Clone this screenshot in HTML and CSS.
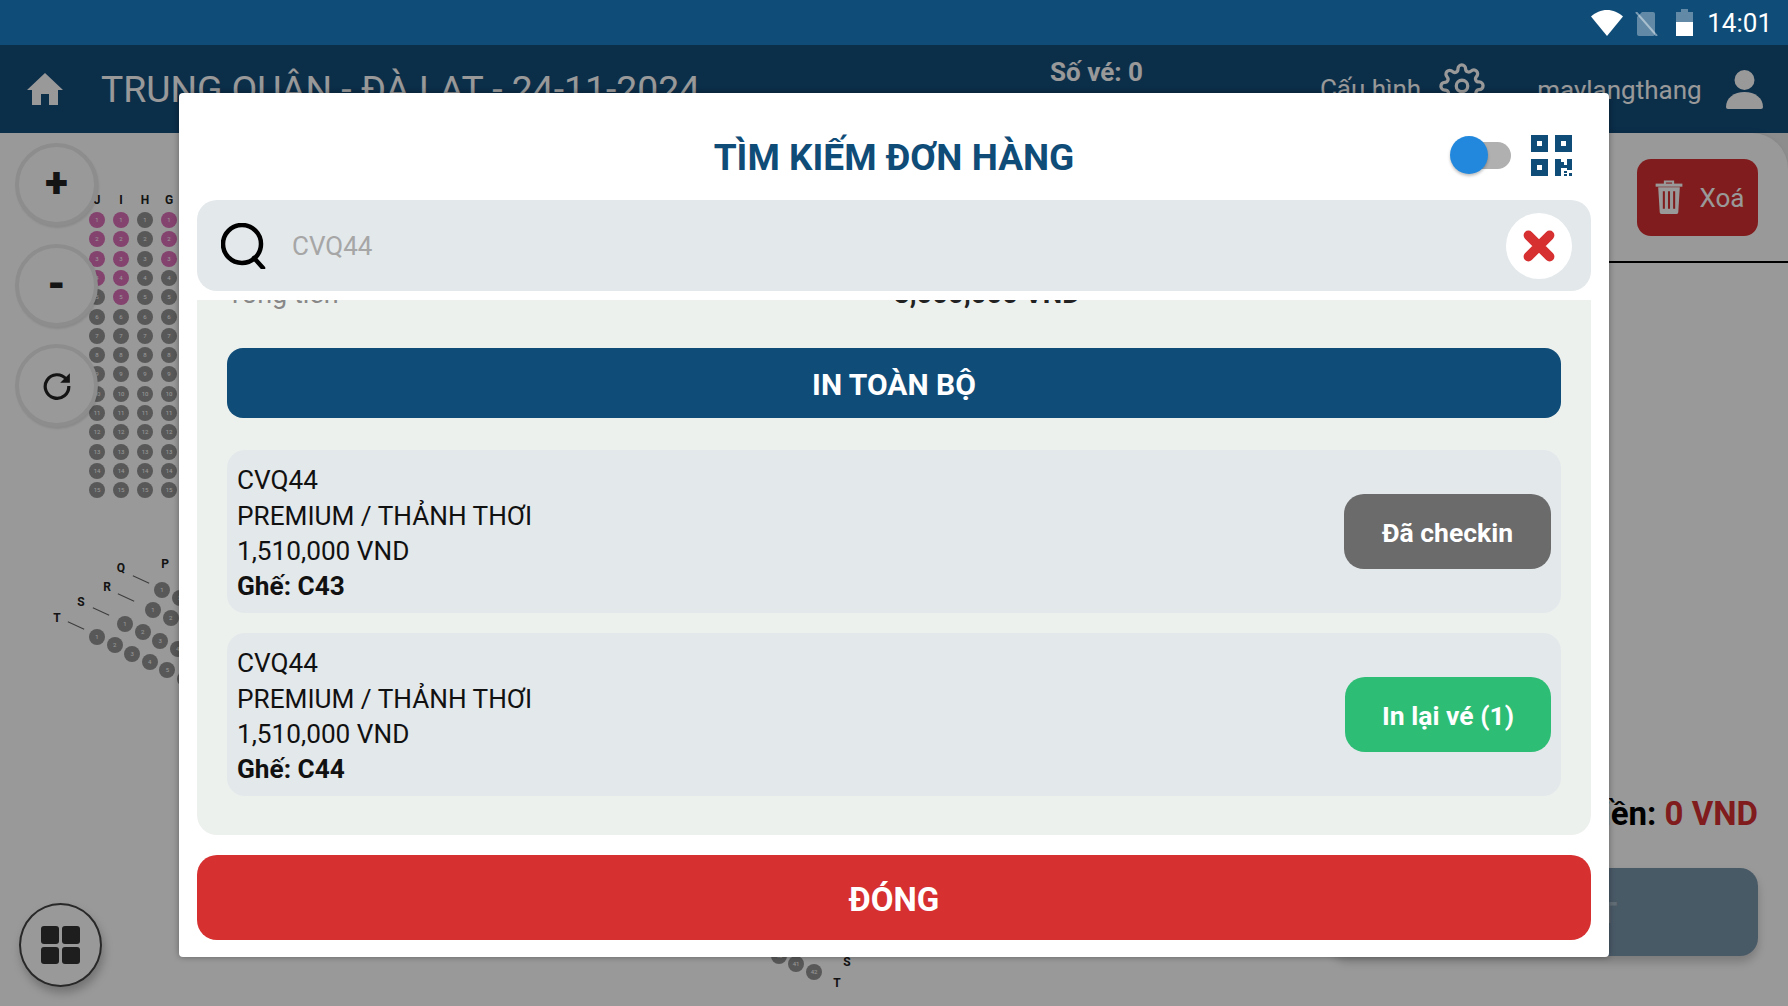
FILE: index.html
```html
<!DOCTYPE html>
<html lang="vi">
<head>
    <meta charset="UTF-8">
    <meta name="viewport" content="width=device-width, initial-scale=1.0">
    <title>Tìm kiếm đơn hàng</title>
    <link rel="stylesheet" href="styles.css">
</head>
<body>
    <div class="status-bar">
        <svg class="status-wifi" viewBox="0 0 32 26"><path d="M0 6.500C4.500 2.500 10 0 16 0s11.500 2.500 16 6.500L16 26z" fill="#fff"/></svg>
        <svg class="status-sim" viewBox="0 0 23 24"><path d="M7 0h11a2 2 0 0 1 2 2v20a2 2 0 0 1-2 2H4a2 2 0 0 1-2-2V5z" fill="#fff" opacity="0.35"/><path d="M1 0l21 24" stroke="#fff" stroke-opacity="0.45" stroke-width="2"/></svg>
        <svg class="status-battery" viewBox="0 0 17 27"><path d="M5 0h7v3h5v10H0V3h5z" fill="#fff" opacity="0.35"/><rect y="13" width="17" height="14" fill="#fff"/></svg>
        <span class="status-time">14:01</span>
    </div>

    <div class="screen">
        <header class="top-bar">
            <svg class="home-icon" viewBox="0 0 36 32"><path d="M18 0L36 17h-5v15h-9V21h-8v11H5V17H0z" fill="#fff"/></svg>
            <h1 class="show-title">TRUNG QUÂN - ĐÀ LẠT - 24-11-2024</h1>
            <div class="ticket-count">Số vé: 0</div>
            <div class="config">
                Cấu hình
                <svg class="gear-icon" viewBox="0 0 24 24" fill="none" stroke="#fff" stroke-width="1.700"><circle cx="12" cy="12" r="3"/><path d="M19.400 15a1.650 1.650 0 0 0 .33 1.820l.06.06a2 2 0 1 1-2.830 2.830l-.06-.06a1.650 1.650 0 0 0-2.800 1.170V21a2 2 0 1 1-4 0v-.09a1.650 1.650 0 0 0-2.800-1.170l-.06.06a2 2 0 1 1-2.830-2.830l.06-.06a1.650 1.650 0 0 0-1.170-2.800H3a2 2 0 1 1 0-4h.09a1.650 1.650 0 0 0 1.170-2.800l-.06-.06a2 2 0 1 1 2.830-2.830l.06.06a1.650 1.650 0 0 0 2.800-1.170V3a2 2 0 1 1 4 0v.09a1.650 1.650 0 0 0 2.800 1.170l.06-.06a2 2 0 1 1 2.830 2.830l-.06.06a1.650 1.650 0 0 0 1.170 2.800H21a2 2 0 1 1 0 4h-.09a1.650 1.650 0 0 0-1.510 1z"/></svg>
            </div>
            <div class="account">
                maylangthang
                <svg class="user-icon" viewBox="0 0 37 39"><circle cx="18.500" cy="10" r="10" fill="#fff"/><path d="M0 37c0-9 8-15 18.500-15S37 28 37 37a2 2 0 0 1-2 2H2a2 2 0 0 1-2-2z" fill="#fff"/></svg>
            </div>
        </header>

        <div class="content">
            <main class="seat-map" id="seatMap">
                <div class="zoom-tools">
                    <button class="round-btn">+</button>
                    <button class="round-btn">-</button>
                    <button class="round-btn">
                        <svg class="reload-icon" viewBox="0 0 28 28" fill="none"><path d="M22.500 7.500A11 11 0 1 0 25 14" stroke="#222" stroke-width="3"/><path d="M26 2v9h-9z" fill="#222"/></svg>
                    </button>
                </div>
                <button class="grid-btn">
                    <span></span><span></span><span></span><span></span>
                </button>
            </main>

            <aside class="side-panel">
                <div class="side-top">
                    <button class="delete-btn">
                        <svg class="trash-icon" viewBox="0 0 28 34" fill="none" stroke="#fff"><path d="M10 4V1.500h8V4" stroke-width="2"/><path d="M1 5h26" stroke-width="3"/><path d="M3.500 7l1.500 24.500a2 2 0 0 0 2 1.500h14a2 2 0 0 0 2-1.500L24.500 7z" fill="#fff" stroke="none"/><path d="M9 11v17M14 11v17M19 11v17" stroke="#d63031" stroke-width="2"/></svg>
                        Xoá
                    </button>
                </div>
                <div class="side-total">Tổng tiền: <span class="total-money">0 VND</span></div>
                <button class="pay-btn">CHỐT ĐẶT</button>
            </aside>
        </div>

        <div class="overlay">
            <div class="modal">
                <div class="modal-head">
                    <h2 class="modal-title">TÌM KIẾM ĐƠN HÀNG</h2>
                    <div class="modal-tools">
                        <div class="toggle"><span class="toggle-thumb"></span></div>
                        <svg class="qr-icon" viewBox="0 0 41 41">
                            <path fill-rule="evenodd" fill="#0f4c78" d="M0 0h17v17H0zM6 6v5h5V6zM24 0h17v17H24zM30 6v5h5V6zM0 24h17v17H0zM6 30v5h5v-5z"/>
                            <path fill="#0f4c78" d="M24 24h6v3h3v3h3v-6h5v11h-5v-2h-6v8h-6zM33 36h3v2h-3zM38 38h3v3h-3zM33 39h3v2h-3z"/>
                        </svg>
                    </div>
                </div>

                <div class="search-box">
                    <svg class="search-icon" viewBox="0 0 46 46" fill="none" stroke="#000"><circle cx="21" cy="21" r="19" stroke-width="4.500"/><path d="M33 35l9 10" stroke-width="4.500" stroke-linecap="round"/></svg>
                    <span class="search-text">CVQ44</span>
                    <button class="clear-btn">
                        <svg class="clear-icon" viewBox="0 0 32 32"><path d="M6 6l20 20M26 6L6 26" stroke="#d63031" stroke-width="9" stroke-linecap="round"/></svg>
                    </button>
                </div>

                <div class="result-panel">
                    <div class="total-row">
                        <span class="total-label">Tổng tiền</span>
                        <span class="total-value">3,000,000 VND</span>
                    </div>
                    <button class="print-all">IN TOÀN BỘ</button>

                    <div class="ticket">
                        <div class="ticket-info">
                            <div>CVQ44</div>
                            <div>PREMIUM / THẢNH THƠI</div>
                            <div>1,510,000 VND</div>
                            <div class="ticket-seat">Ghế: C43</div>
                        </div>
                        <button class="ticket-btn checked">Đã checkin</button>
                    </div>

                    <div class="ticket">
                        <div class="ticket-info">
                            <div>CVQ44</div>
                            <div>PREMIUM / THẢNH THƠI</div>
                            <div>1,510,000 VND</div>
                            <div class="ticket-seat">Ghế: C44</div>
                        </div>
                        <button class="ticket-btn reprint">In lại vé (1)</button>
                    </div>
                </div>

                <button class="close-btn">ĐÓNG</button>
            </div>
        </div>
    </div>

    <script src="script.js"></script>
</body>
</html>
```

FILE: styles.css
```css
* {
    box-sizing: border-box;
}

body {
    font-family: Roboto, "Noto Sans", sans-serif;
    background-color: #fff;
    margin: 0;
    padding: 0;
    width: 1788px;
    height: 1006px;
    overflow: hidden;
}

button {
    font-family: inherit;
    border: none;
    cursor: pointer;
}

.status-bar {
    height: 45px;
    background: #0f4c78;
    color: white;
    display: flex;
    align-items: center;
    justify-content: flex-end;
    padding-right: 16px;
}

.status-wifi {
    width: 32px;
    height: 26px;
    margin-right: 12px;
}

.status-sim {
    width: 23px;
    height: 24px;
    margin: 2px 18px 0 0;
}

.status-battery {
    width: 17px;
    height: 27px;
    margin-right: 14px;
}

.status-time {
    font-size: 26px;
}

.screen {
    position: relative;
    height: 961px;
    display: flex;
    flex-direction: column;
}

.top-bar {
    height: 88px;
    background: #134d7b;
    color: white;
    display: flex;
    align-items: center;
    padding: 0 25px 0 27px;
}

.home-icon {
    width: 36px;
    height: 32px;
}

.show-title {
    font-size: 37.300px;
    font-weight: 400;
    margin: 0 0 0 38px;
    width: 640px;
    white-space: nowrap;
}

.ticket-count {
    font-size: 26px;
    font-weight: 700;
    margin: 0 0 34px 309px;
}

.config {
    display: flex;
    align-items: center;
    gap: 18px;
    font-size: 26px;
    margin-left: 177px;
}

.gear-icon {
    width: 46px;
    height: 46px;
    margin-top: -6px;
}

.account {
    display: flex;
    align-items: center;
    gap: 24px;
    font-size: 26px;
    margin: 2px 0 0 52px;
}

.user-icon {
    width: 37px;
    height: 39px;
    margin-top: -2px;
}

.content {
    flex: 1;
    display: flex;
    background: #ebebeb;
}

.seat-map {
    flex: 1;
    position: relative;
    overflow: hidden;
    background: white;
}

.seat {
    position: absolute;
    width: 16px;
    height: 16px;
    border-radius: 50%;
    background: #939393;
    color: white;
    font-size: 6px;
    line-height: 16px;
    text-align: center;
}

.seat.sold {
    background: #dc6eb8;
}

.row-label {
    position: absolute;
    font-size: 12px;
    font-weight: 700;
    color: #222;
    width: 14px;
    margin-left: -7px;
    line-height: 12px;
    text-align: center;
}

.row-line {
    position: absolute;
    width: 18px;
    height: 1px;
    background: #666;
    transform: rotate(25deg);
}

.zoom-tools {
    position: absolute;
    left: 15px;
    top: 10px;
    display: flex;
    flex-direction: column;
    gap: 17.500px;
    z-index: 2;
}

.round-btn {
    width: 83px;
    height: 83px;
    border-radius: 50%;
    background: white;
    border: 4px solid #ebebeb;
    box-shadow: 1px 2px 2px rgba(0, 0, 0, 0.1);
    color: #222;
    font-size: 42px;
    font-weight: 900;
    line-height: 1;
    padding: 0 0 3px;
    display: flex;
    align-items: center;
    justify-content: center;
}

.reload-icon {
    width: 30px;
    height: 30px;
    margin-top: 3px;
}

.grid-btn {
    position: absolute;
    left: 19px;
    top: 770px;
    width: 83px;
    height: 84px;
    border-radius: 50%;
    background: white;
    border: 2px solid #444;
    box-shadow: 2px 6px 10px rgba(0, 0, 0, 0.25);
    padding: 21px 20px;
    display: grid;
    grid-template-columns: 1fr 1fr;
    gap: 3px;
    z-index: 2;
}

.grid-btn span {
    background: #333;
    border-radius: 3px;
}

.side-panel {
    width: 511px;
    background: white;
    box-shadow: -3px 0 6px rgba(0, 0, 0, 0.12);
    border-top-right-radius: 36px;
    padding-right: 30px;
    display: flex;
    flex-direction: column;
    align-items: flex-end;
}

.side-top {
    width: 511px;
    margin-right: -30px;
    height: 130px;
    padding: 26px 30px 0 0;
    border-bottom: 2px solid #000;
    display: flex;
    justify-content: flex-end;
}

.delete-btn {
    width: 121px;
    height: 77px;
    background: #d63031;
    color: white;
    border-radius: 14px;
    font-size: 26px;
    display: flex;
    align-items: center;
    justify-content: center;
    gap: 15px;
    padding-left: 10px;
}

.trash-icon {
    width: 30px;
    height: 35px;
}

.side-total {
    margin-top: 531px;
    font-size: 33px;
    font-weight: 700;
    color: #000;
}

.total-money {
    color: #d63031;
}

.pay-btn {
    margin-top: 35px;
    width: 428px;
    height: 88px;
    background: #7b96ac;
    color: #a3b7c6;
    border-radius: 18px;
    box-shadow: 0 6px 10px rgba(0, 0, 0, 0.2);
    font-size: 30px;
    font-weight: 700;
    padding-left: 10px;
}

.overlay {
    position: absolute;
    inset: 0;
    background: rgba(0, 0, 0, 0.4);
    z-index: 5;
    display: flex;
    align-items: flex-start;
    justify-content: center;
    padding-top: 48px;
}

.modal {
    width: 1430px;
    height: 864px;
    background: white;
    border-radius: 4px;
    box-shadow: 0 0 6px rgba(0, 0, 0, 0.35);
    padding: 0 18px;
    display: flex;
    flex-direction: column;
}

.modal-head {
    height: 107px;
    display: grid;
    grid-template-columns: 1fr auto 1fr;
    align-items: center;
}

.modal-title {
    grid-column: 2;
    margin: 22px 0 0;
    font-size: 37px;
    font-weight: 700;
    color: #0f4c78;
}

.modal-tools {
    grid-column: 3;
    justify-self: end;
    display: flex;
    align-items: center;
    gap: 20px;
    padding: 18px 19px 0 0;
}

.toggle {
    position: relative;
    width: 60px;
    height: 27px;
    background: #b0b0b0;
    border-radius: 14px;
}

.toggle-thumb {
    position: absolute;
    left: -1px;
    top: -6px;
    width: 38px;
    height: 38px;
    border-radius: 50%;
    background: #2188dd;
    box-shadow: 0 2px 3px rgba(0, 0, 0, 0.25);
}

.qr-icon {
    width: 41px;
    height: 41px;
}

.search-box {
    height: 91px;
    background: #e3e8eb;
    border-radius: 20px;
    display: flex;
    align-items: center;
    padding: 0 19px 0 24px;
    flex-shrink: 0;
}

.search-icon {
    width: 46px;
    height: 46px;
}

.search-text {
    flex: 1;
    margin-left: 25px;
    font-size: 26px;
    color: #a6a6a6;
}

.clear-btn {
    width: 66px;
    height: 66px;
    border-radius: 50%;
    background: white;
    padding: 0;
    display: flex;
    align-items: center;
    justify-content: center;
}

.clear-icon {
    width: 34px;
    height: 34px;
}

.result-panel {
    margin-top: 9px;
    height: 535px;
    background: #edf1ee;
    border-radius: 0 0 20px 20px;
    padding: 0 30px;
    overflow: hidden;
    flex-shrink: 0;
}

.total-row {
    display: flex;
    margin-top: -21px;
    height: 30px;
    font-size: 27px;
    line-height: 30px;
}

.total-label {
    width: 667px;
    color: #888;
}

.total-value {
    font-size: 27.500px;
    font-weight: 700;
    color: #222;
}

.print-all {
    display: block;
    width: 100%;
    height: 70px;
    margin-top: 39px;
    padding-top: 3px;
    background: #0f4c78;
    color: white;
    border-radius: 16px;
    font-size: 30px;
    font-weight: 700;
}

.ticket {
    height: 163px;
    margin-top: 32px;
    background: #e3e8eb;
    border-radius: 18px;
    display: flex;
    align-items: center;
    justify-content: space-between;
    padding: 0 10px;
}

.ticket + .ticket {
    margin-top: 20px;
}

.ticket-info {
    font-size: 26.200px;
    line-height: 35.400px;
    color: #111;
    margin-top: 5px;
}

.ticket-seat {
    font-weight: 700;
}

.ticket-btn {
    width: 206px;
    height: 75px;
    padding-top: 3px;
    border-radius: 20px;
    color: white;
    font-size: 26.500px;
    font-weight: 700;
}

.ticket-btn.checked {
    background: #6b6b6b;
    width: 207px;
}

.ticket-btn.reprint {
    background: #2ebd75;
}

.close-btn {
    margin-top: 20px;
    height: 85px;
    padding-top: 4px;
    background: #d63031;
    color: white;
    border-radius: 20px;
    font-size: 33px;
    font-weight: 700;
    flex-shrink: 0;
}
```

FILE: script.js
```js
// Draw the part of the seat map that can be seen behind the dialog
const seatMap = document.getElementById('seatMap');
const mapTop = 133; // seat map starts under the status bar and the top bar

function addSeat(x, y, number, sold) {
    const seat = document.createElement('div');
    seat.className = sold ? 'seat sold' : 'seat';
    seat.style.left = (x - 8) + 'px';
    seat.style.top = (y - 8 - mapTop) + 'px';
    seat.textContent = number;
    seatMap.appendChild(seat);
}

function addLabel(x, y, text) {
    const label = document.createElement('div');
    label.className = 'row-label';
    label.style.left = x + 'px';
    label.style.top = (y - 6 - mapTop) + 'px';
    label.textContent = text;
    seatMap.appendChild(label);
}

function addLine(x, y) {
    const line = document.createElement('div');
    line.className = 'row-line';
    line.style.left = (x - 9) + 'px';
    line.style.top = (y - mapTop) + 'px';
    seatMap.appendChild(line);
}

// Straight block on the left: how many seats from the top are sold in each column
const columns = [
    { x: 97, name: 'J', sold: 4 },
    { x: 121, name: 'I', sold: 5 },
    { x: 145, name: 'H', sold: 0 },
    { x: 169, name: 'G', sold: 3 }
];

columns.forEach((column) => {
    addLabel(column.x, 200, column.name);
    for (let i = 0; i < 15; i++) {
        addSeat(column.x, 220 + i * 19.3, i + 1, i < column.sold);
    }
});

// Fan shaped block under it
const fanRows = [
    { x: 97, y: 637, name: 'T', labelX: 57, labelY: 618, lineX: 76, lineY: 625, count: 6 },
    { x: 125, y: 624, name: 'S', labelX: 81, labelY: 602, lineX: 101, lineY: 611, count: 4 },
    { x: 153, y: 610, name: 'R', labelX: 107, labelY: 587, lineX: 126, lineY: 597, count: 2 },
    { x: 162, y: 590, name: 'Q', labelX: 121, labelY: 568, lineX: 141, lineY: 579, count: 2 }
];

fanRows.forEach((row) => {
    addLabel(row.labelX, row.labelY, row.name);
    addLine(row.lineX, row.lineY);
    for (let i = 0; i < row.count; i++) {
        addSeat(row.x + i * 17.6, row.y + i * 8.3, i + 1, false);
    }
});
addLabel(165, 564, 'P');

// Bottom end of the block in the middle
addSeat(779, 956, 40, false);
addSeat(796, 964, 41, false);
addSeat(814, 972, 42, false);
addLabel(847, 962, 'S');
addLabel(837, 983, 'T');
```
